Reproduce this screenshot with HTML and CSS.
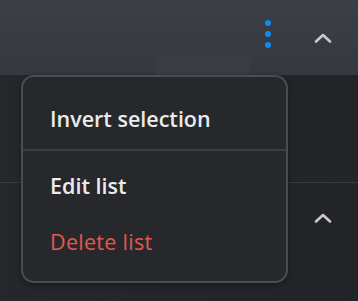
FILE: index.html
```html
<!DOCTYPE html>
<html>
<head>
<meta charset="utf-8">
<link rel="stylesheet" href="styles.css">
</head>
<body>
<div class="page">
  <div class="header">
    <div class="patch"></div>
    <button class="more" aria-label="More">
      <span class="dot"></span><span class="dot"></span><span class="dot"></span>
    </button>
    <button class="chev" aria-label="Collapse">
      <svg width="18" height="10" viewBox="0 0 18 10"><path d="M2 8.5 L9 2 L16 8.5" fill="none" stroke="#c9cacc" stroke-width="2.6" stroke-linecap="round" stroke-linejoin="round"/></svg>
    </button>
  </div>
  <div class="row first"></div>
  <div class="row second">
    <button class="chev" aria-label="Collapse">
      <svg width="18" height="10" viewBox="0 0 18 10"><path d="M2 8.5 L9 2 L16 8.5" fill="none" stroke="#c9cacc" stroke-width="2.6" stroke-linecap="round" stroke-linejoin="round"/></svg>
    </button>
  </div>
  <div class="menu">
    <div class="item top">Invert selection</div>
    <div class="sep"></div>
    <div class="item edit">Edit list</div>
    <div class="item danger">Delete list</div>
  </div>
</div>
</body>
</html>
```
FILE: styles.css
```css
html, body {
  margin: 0;
  padding: 0;
  background: #222428;
}
.page {
  position: relative;
  width: 358px;
  height: 301px;
  overflow: hidden;
  font-family: "Open Sans", "Noto Sans", sans-serif;
  background: linear-gradient(90deg, #25272b 0%, #232529 60%, #222428 100%);
}
.header {
  position: relative;
  height: 75px;
  background: linear-gradient(180deg, #3c3f46 0%, #383b41 55%, #35383e 100%);
  display: flex;
  align-items: center;
  justify-content: flex-end;
  padding-right: 26px;
  box-sizing: border-box;
}
.patch {
  position: absolute;
  left: 156px;
  top: 57px;
  width: 95px;
  height: 18px;
  background: #393c42;
}
button {
  background: none;
  border: 0;
  padding: 0;
  margin: 0;
  cursor: pointer;
}
.more {
  width: 20px;
  height: 28px;
  display: flex;
  flex-direction: column;
  align-items: center;
  justify-content: space-between;
  margin-right: 36px;
  margin-top: -8px;
}
.dot {
  width: 6px;
  height: 6px;
  border-radius: 50%;
  background: #0a8ef5;
}
.chev {
  width: 18px;
  height: 10px;
  display: flex;
}
.row {
  box-sizing: border-box;
}
.row.first {
  height: 108px;
  border-bottom: 1px solid #393b40;
}
.row.second {
  height: 118px;
  display: flex;
  justify-content: flex-end;
  padding: 30px 26px 0 0;
}
.menu {
  position: absolute;
  left: 21px;
  top: 75px;
  width: 267px;
  height: 208px;
  box-sizing: border-box;
  border: 2px solid #4a4c52;
  border-radius: 13px;
  background: #26282c;
  box-shadow: 0 2px 6px rgba(0,0,0,0.35);
}
.item {
  padding-left: 27px;
  font-size: 21.5px;
  line-height: 28px;
  color: #ebebeb;
  font-weight: 600;
  letter-spacing: 0;
}
.item.top {
  padding-top: 28px;
  height: 72px;
  box-sizing: border-box;
}
.sep {
  height: 2px;
  background: #3a3c41;
}
.item.edit {
  padding-top: 21px;
}
.item.danger {
  padding-top: 28px;
  color: #e5574c;
  font-weight: 400;
  letter-spacing: 0.3px;
}
```
